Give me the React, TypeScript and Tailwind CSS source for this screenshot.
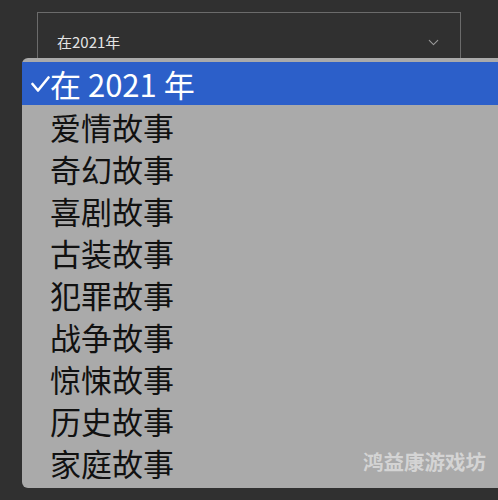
import { ChevronDown } from 'lucide-react'

const genres = ['爱情故事', '奇幻故事', '喜剧故事', '古装故事', '犯罪故事', '战争故事', '惊悚故事', '历史故事', '家庭故事']

const font = { fontFamily: '"Noto Sans CJK SC", "Noto Sans", sans-serif' }

export default function App() {
    return (
        <div className="relative w-[498px] h-[500px] overflow-hidden bg-[#303030]" style={font}>
            <div className="pt-[12px] pl-[37px]">
                <div className="w-[424px] h-[62px] border border-[#6b6b6b] flex items-center justify-between pl-[19px] pr-[18px] pb-[2px]">
                    <span className="text-[15px] text-[#e4e4e4]">在2021年</span>
                    <ChevronDown className="w-[17px] h-[17px] text-[#9a9a9a]" strokeWidth={1.5} />
                </div>
            </div>

            <div className="absolute top-[58px] left-[22px] w-[500px] h-[430px] bg-[#aaaaaa] rounded-[6px] pt-[4px]">
                <div className="h-[43px] bg-[#2c5fc9] flex items-center text-white text-[31px] leading-none">
                    <svg className="w-[19px] h-[16px] ml-[9px]" viewBox="0 0 19 16" fill="none">
                        <path d="M1.5 8 L7 14.5 L17.5 1.5" stroke="white" strokeWidth="2.6" strokeLinecap="round" strokeLinejoin="round" />
                    </svg>
                    <span className="mb-[1px]">在 2021 年</span>
                </div>
                {genres.map((g) => (
                    <div key={g} className="h-[42px] flex items-center pl-[28px] text-[31px] text-[#111111] leading-none">
                        {g}
                    </div>
                ))}
            </div>

            <div className="absolute left-[363px] top-[446px] text-[20.5px] font-bold text-[#d4d4d4]">
                鸿益康游戏坊
            </div>
        </div>
    )
}
